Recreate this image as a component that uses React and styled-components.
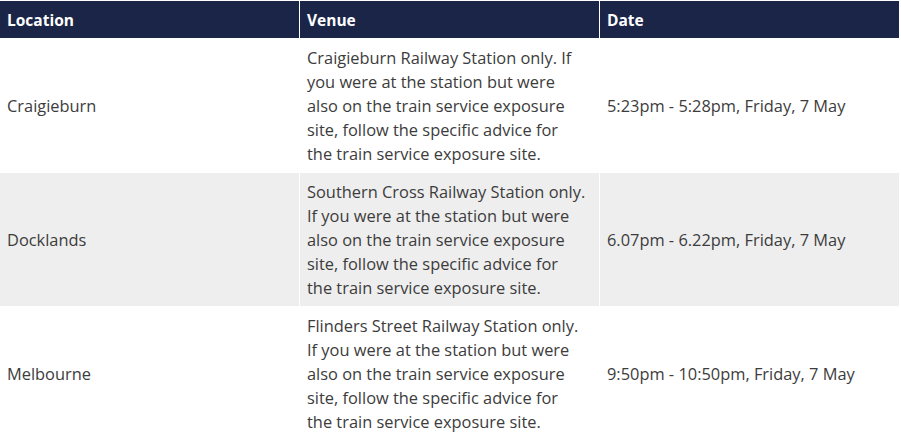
import styled, { createGlobalStyle } from 'styled-components';

const exposures = [
  {
    location: 'Craigieburn',
    venue: [
      'Craigieburn Railway Station only. If',
      'you were at the station but were',
      'also on the train service exposure',
      'site, follow the specific advice for',
      'the train service exposure site.',
    ],
    date: '5:23pm - 5:28pm, Friday, 7 May',
  },
  {
    location: 'Docklands',
    venue: [
      'Southern Cross Railway Station only.',
      'If you were at the station but were',
      'also on the train service exposure',
      'site, follow the specific advice for',
      'the train service exposure site.',
    ],
    date: '6.07pm - 6.22pm, Friday, 7 May',
  },
  {
    location: 'Melbourne',
    venue: [
      'Flinders Street Railway Station only.',
      'If you were at the station but were',
      'also on the train service exposure',
      'site, follow the specific advice for',
      'the train service exposure site.',
    ],
    date: '9:50pm - 10:50pm, Friday, 7 May',
  },
];

const App = () => {
  return (
    <>
      <GlobalStyle />
      <StyledTable>
        <thead>
          <tr>
            <HeadCell>Location</HeadCell>
            <HeadCell>Venue</HeadCell>
            <HeadCell>Date</HeadCell>
          </tr>
        </thead>
        <tbody>
          {exposures.map((row, i) => (
            <Row key={row.location} $striped={i % 2 === 1}>
              <Cell>{row.location}</Cell>
              <Cell>
                {row.venue.map((line) => (
                  <Line key={line}>{line}</Line>
                ))}
              </Cell>
              <Cell>{row.date}</Cell>
            </Row>
          ))}
        </tbody>
      </StyledTable>
    </>
  );
};

export default App;

const GlobalStyle = createGlobalStyle`
  body {
    margin: 0;
    background: #ffffff;
    font-family: "Open Sans", "Noto Sans", sans-serif;
  }
`;

const StyledTable = styled.table`
  border-collapse: collapse;
  margin-top: 1px;
  table-layout: fixed;
  width: 899px;
`;

const HeadCell = styled.th`
  background: #1b2547;
  border-left: 1px solid #ffffff;
  color: #ffffff;
  font-size: 15.5px;
  font-weight: 700;
  height: 37px;
  padding: 0 7px;
  text-align: left;
  width: 33.33%;

  &:first-child {
    border-left: none;
  }
`;

const Row = styled.tr`
  background: ${({ $striped }) => ($striped ? '#eeeeee' : '#ffffff')};
  border-top: 1px solid #ffffff;
`;

const Cell = styled.td`
  border-left: 1px solid #ffffff;
  color: #3c3c3c;
  font-size: 16.4px;
  height: 133px;
  line-height: 24px;
  padding: 0 7px;
  vertical-align: middle;
  white-space: nowrap;

  &:first-child {
    border-left: none;
  }
`;

const Line = styled.span`
  display: block;
`;
